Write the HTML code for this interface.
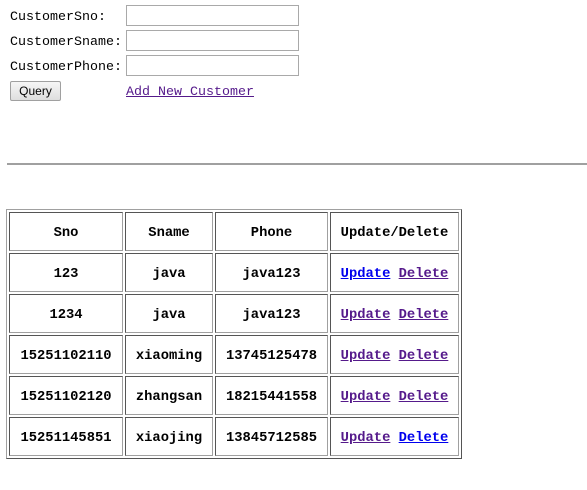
<!DOCTYPE html>
<html><head><style>
body{margin:0;background:#fff;font-family:"Liberation Mono",monospace;font-size:13.33px;color:#000;position:relative;width:587px;height:490px;overflow:hidden}
.l{position:absolute;left:10px;line-height:16px}
.in{position:absolute;left:126px;border:1px solid #a9a9a9;box-sizing:border-box;width:173px;height:21px}
.btn{position:absolute;left:10px;top:81px;width:51px;height:20px;box-sizing:border-box;border:1px solid #a0a0a0;border-radius:2px;background:linear-gradient(#f6f6f6,#dedede);font-family:"Liberation Sans",sans-serif;font-size:12px;text-align:center;line-height:18px}
a{color:#551a8b;text-decoration:underline}
a.b{color:#0000ee}
.hr{position:absolute;left:7px;top:163px;width:580px;height:2px;background:#a0a0a0}
table{position:absolute;left:6px;top:209px;border-collapse:separate;border-spacing:2px;border:1px solid;border-color:#a0a0a0 #555 #555 #a0a0a0}
td{border:1px solid;border-color:#555 #a0a0a0 #a0a0a0 #555;padding:4px 0 0 0;text-align:center;font-weight:bold;font-size:13.8px;box-sizing:border-box;height:39px}
</style></head><body>
<div class="l" style="top:10px">CustomerSno:</div>
<div class="l" style="top:35px">CustomerSname:</div>
<div class="l" style="top:60px">CustomerPhone:</div>
<div class="in" style="top:5px"></div>
<div class="in" style="top:30px"></div>
<div class="in" style="top:55px"></div>
<div class="btn">Query</div>
<div class="l" style="left:126px;top:85px"><a>Add New Customer</a></div>
<div class="hr"></div>
<table>
<tr><td style="width:114px">Sno</td><td style="width:88px">Sname</td><td style="width:113px">Phone</td><td style="width:129px">Update/Delete</td></tr>
<tr><td>123</td><td>java</td><td>java123</td><td><a class="b">Update</a> <a>Delete</a></td></tr>
<tr><td>1234</td><td>java</td><td>java123</td><td><a>Update</a> <a>Delete</a></td></tr>
<tr><td>15251102110</td><td>xiaoming</td><td>13745125478</td><td><a>Update</a> <a>Delete</a></td></tr>
<tr><td>15251102120</td><td>zhangsan</td><td>18215441558</td><td><a>Update</a> <a>Delete</a></td></tr>
<tr><td>15251145851</td><td>xiaojing</td><td>13845712585</td><td><a>Update</a> <a class="b">Delete</a></td></tr>
</table>
</body></html>
